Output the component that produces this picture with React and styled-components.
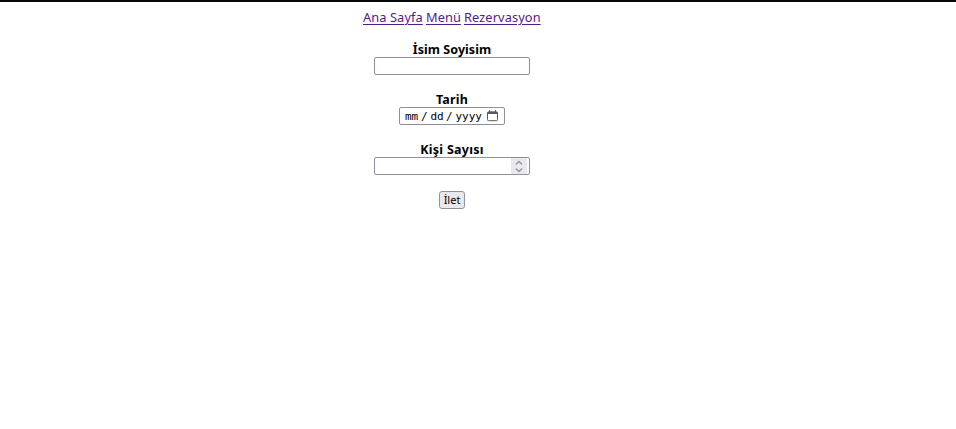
import React from "react";
import styled, { createGlobalStyle } from "styled-components";

const GlobalStyle = createGlobalStyle`
  * { box-sizing: border-box; }
  body {
    margin: 0;
    background: #fff;
    color: #000;
    font-family: "Noto Sans", sans-serif;
    font-size: 12.8px;
  }
`;

const Page = styled.main`
  border-top: 2px solid #070506;
  min-height: 429px;
`;

const Column = styled.div`
  width: 904px;
  display: flex;
  flex-direction: column;
  align-items: center;
  padding-top: 7px;
`;

const Nav = styled.nav`
  display: flex;
  gap: 3px;
  height: 16px;
  margin-bottom: 16px;
`;

const NavLink = styled.a`
  width: ${(p) => p.$width}px;
  height: 16px;
  line-height: 17px;
  white-space: nowrap;
  color: #551a8b;
  letter-spacing: ${(p) => p.$spacing}px;
  text-decoration: underline;
  text-decoration-thickness: 1px;
  text-underline-offset: 2px;
`;

const Form = styled.form`
  display: flex;
  flex-direction: column;
  align-items: center;
  gap: 16px;
`;

const Field = styled.div`
  display: flex;
  flex-direction: column;
  align-items: center;
`;

const Label = styled.label`
  height: 16px;
  line-height: 17px;
  font-weight: 700;
  font-size: 12.5px;
  white-space: nowrap;
  letter-spacing: ${(p) => p.$spacing}px;
`;

const TextInput = styled.input`
  width: 156px;
  height: 18px;
  margin: 0;
  padding: 1px 4px;
  border: 1px solid #8f8f9d;
  border-radius: 2px;
  background: #fff;
  font: 11px "Noto Sans", sans-serif;
`;

const InputBox = styled.div`
  width: ${(p) => p.$width}px;
  height: 18px;
  display: flex;
  align-items: center;
  justify-content: space-between;
  border: 1px solid #8f8f9d;
  border-radius: 2px;
  background: #fff;
`;

const DateBox = styled(InputBox)`
  padding: 0 6px 0 5px;
`;

const DateParts = styled.div`
  display: flex;
  padding-top: 2px;
  font-family: "DejaVu Sans Mono", monospace;
  font-size: 11px;
  line-height: 16px;
`;

const DatePart = styled.span`
  width: ${(p) => p.$width}px;
  white-space: nowrap;
`;

const NumberInput = styled.input`
  flex: 1;
  min-width: 0;
  height: 16px;
  border: 0;
  padding: 0 4px;
  background: transparent;
  font: 11px "Noto Sans", sans-serif;
`;

const Spinner = styled.div`
  width: 16px;
  height: 16px;
  margin-right: 2px;
  background: #e9e9ed;
`;

const Icon = styled.svg`
  display: block;
`;

const SubmitButton = styled.button`
  width: 26px;
  height: 18px;
  padding: 0;
  border: 1px solid #8f8f9d;
  border-radius: 3px;
  background: #e9e9ed;
  color: #000;
  font: 11px/14px "Noto Sans", sans-serif;
`;

const links = [
  { text: "Ana Sayfa", width: 60, spacing: 0.1 },
  { text: "Menü", width: 35, spacing: 0.05 },
  { text: "Rezervasyon", width: 77, spacing: 0.1 },
];

const dateParts = [
  { text: "mm", width: 16 },
  { text: "/", width: 9.5 },
  { text: "dd", width: 15.5 },
  { text: "/", width: 9.5 },
  { text: "yyyy", width: 27 },
];

export default function App() {
  return (
    <Page>
      <GlobalStyle />
      <Column>
        <Nav>
          {links.map((link) => (
            <NavLink key={link.text} href="#" $width={link.width} $spacing={link.spacing}>
              {link.text}
            </NavLink>
          ))}
        </Nav>
        <Form>
          <Field>
            <Label htmlFor="name" $spacing={0.05}>İsim Soyisim</Label>
            <TextInput id="name" type="text" />
          </Field>
          <Field>
            <Label $spacing={0.2}>Tarih</Label>
            <DateBox $width={106}>
              <DateParts>
                {dateParts.map((part, i) => (
                  <DatePart key={i} $width={part.width}>
                    {part.text}
                  </DatePart>
                ))}
              </DateParts>
              <Icon width="11" height="12" viewBox="0 0 11 12" fill="none" stroke="#5b5b5f">
                <rect x="0.5" y="1.8" width="10" height="8.9" rx="1" />
                <path d="M0.5 3h10" strokeWidth="2" />
                <path d="M2.5 0.2v2M8.5 0.2v2" />
              </Icon>
            </DateBox>
          </Field>
          <Field>
            <Label htmlFor="guests" $spacing={0.26}>Kişi Sayısı</Label>
            <InputBox $width={156}>
              <NumberInput id="guests" type="text" inputMode="numeric" />
              <Spinner>
                <Icon width="16" height="16" viewBox="0 0 16 16" fill="none" stroke="#8f8f9d" strokeWidth="1.2" strokeLinecap="round" strokeLinejoin="round">
                  <path d="M5.3 6L8 3.5L10.7 6" />
                  <path d="M5.3 11L8 13.5L10.7 11" />
                </Icon>
              </Spinner>
            </InputBox>
          </Field>
          <SubmitButton type="button">İlet</SubmitButton>
        </Form>
      </Column>
    </Page>
  );
}
